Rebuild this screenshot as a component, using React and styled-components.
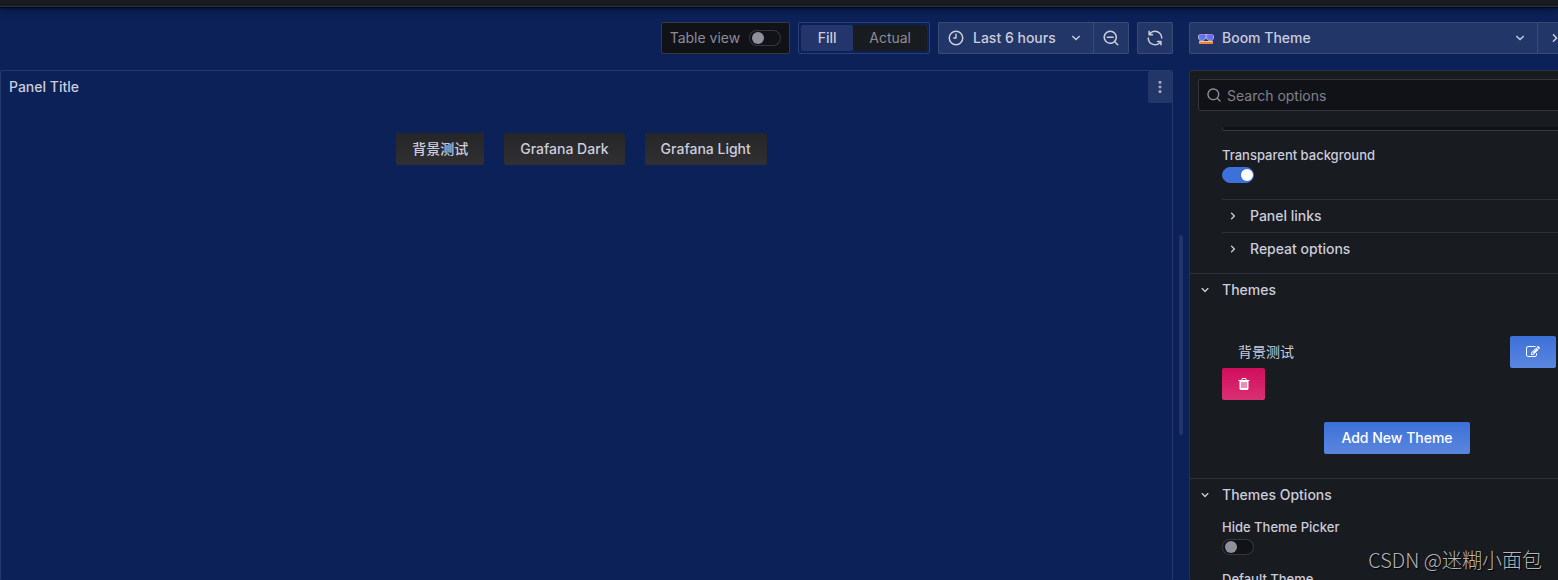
import React, { useState } from "react";
import styled, { createGlobalStyle, css } from "styled-components";

const color = {
  canvas: "#0b2158",
  surface: "#181b1f",
  field: "#111217",
  text: "#ccccdc",
  muted: "#8b8c97",
  line: "rgba(204, 204, 220, 0.14)",
  fieldLine: "rgba(204, 204, 220, 0.2)",
  raised: "rgba(204, 204, 220, 0.12)",
  primary: "#3d71d9",
};

const GlobalStyle = createGlobalStyle`
  *, *::before, *::after { box-sizing: border-box; }
  body {
    margin: 0;
    background: ${color.canvas};
    color: ${color.text};
    font: 400 14px/22px Inter, "Noto Sans CJK SC", sans-serif;
  }
  button, input, textarea { font: inherit; color: inherit; }
  button { margin: 0; padding: 0; border: 0; background: none; cursor: pointer; }
`;

const iconPaths = {
  clock:
    "M12,2A10,10,0,1,0,22,12,10,10,0,0,0,12,2Zm0,18a8,8,0,1,1,8-8A8,8,0,0,1,12,20ZM12,6a1,1,0,0,0-1,1v4H9a1,1,0,0,0,0,2h3a1,1,0,0,0,1-1V7A1,1,0,0,0,12,6Z",
  search:
    "M21.71,20.29,18,16.61A9,9,0,1,0,16.61,18l3.68,3.68a1,1,0,0,0,1.42,0A1,1,0,0,0,21.71,20.29ZM11,18a7,7,0,1,1,7-7A7,7,0,0,1,11,18Z",
  zoomOut:
    "M21.71,20.29,18,16.61A9,9,0,1,0,16.61,18l3.68,3.68a1,1,0,0,0,1.42,0A1,1,0,0,0,21.71,20.29ZM11,18a7,7,0,1,1,7-7A7,7,0,0,1,11,18Zm4-8H7a1,1,0,0,0,0,2h8a1,1,0,0,0,0-2Z",
  sync:
    "M19.91,15.51H15.38a1,1,0,0,0,0,2h2.4A8,8,0,0,1,4,12a1,1,0,1,0-2,0,10,10,0,0,0,16.88,7.23V21a1,1,0,0,0,2,0V16.5A1,1,0,0,0,19.91,15.51ZM12,2A10,10,0,0,0,5.12,4.77V3a1,1,0,0,0-2,0V7.5a1,1,0,0,0,1,1h4.5a1,1,0,0,0,0-2H6.22A8,8,0,0,1,20,12a1,1,0,0,0,2,0A10,10,0,0,0,12,2Z",
  down:
    "M17,9.17a1,1,0,0,0-1.41,0L12,12.71,8.46,9.17a1,1,0,0,0-1.41,0,1,1,0,0,0,0,1.42l4.24,4.24a1,1,0,0,0,1.42,0L17,10.59A1,1,0,0,0,17,9.17Z",
  right:
    "M14.83,11.29,10.59,7.05a1,1,0,0,0-1.42,0,1,1,0,0,0,0,1.41L12.71,12,9.17,15.54a1,1,0,0,0,0,1.41,1,1,0,0,0,.71.29,1,1,0,0,0,.71-.29l4.24-4.24A1,1,0,0,0,14.83,11.29Z",
  dots:
    "M10,3h4v4h-4ZM10,10h4v4h-4ZM10,17h4v4h-4Z",
};

const solidPaths = {
  edit:
    "M888 1184l116-116-152-152-116 116v56h96v96h56zm440-720q-16-16-33 1l-350 350q-17 17-1 33t33-1l350-350q17-17 1-33zm80 594v190q0 119-84.5 203.5t-203.5 84.5h-832q-119 0-203.5-84.5t-84.5-203.5v-832q0-119 84.5-203.5t203.5-84.5h832q63 0 117 25 15 7 18 23 3 17-9 29l-49 49q-14 14-32 8-23-6-45-6h-832q-66 0-113 47t-47 113v832q0 66 47 113t113 47h832q66 0 113-47t47-113v-126q0-13 9-22l64-64q15-15 35-7t20 29zm-96-738l288 288-672 672h-288v-288zm444 132l-92 92-288-288 92-92q28-28 68-28t68 28l152 152q28 28 28 68t-28 68z",
  trash:
    "M704 1376v-704q0-14-9-23t-23-9h-64q-14 0-23 9t-9 23v704q0 14 9 23t23 9h64q14 0 23-9t9-23zm256 0v-704q0-14-9-23t-23-9h-64q-14 0-23 9t-9 23v704q0 14 9 23t23 9h64q14 0 23-9t9-23zm256 0v-704q0-14-9-23t-23-9h-64q-14 0-23 9t-9 23v704q0 14 9 23t23 9h64q14 0 23-9t9-23zm-544-992h448l-48-117q-7-9-17-11h-317q-10 2-17 11zm928 32v64q0 14-9 23t-23 9h-96v948q0 83-47 143.5t-113 60.5h-832q-66 0-113-58.5t-47-141.5v-952h-96q-14 0-23-9t-9-23v-64q0-14 9-23t23-9h309l70-167q15-37 54-63t79-26h320q40 0 79 26t54 63l70 167h309q14 0 23 9t9 23z",
};

const Svg = styled.svg`
  display: block;
  flex: none;
  fill: currentColor;
`;

const Icon = ({ name, size = 16 }) => (
  <Svg width={size} height={size} viewBox="0 0 24 24" aria-hidden="true">
    <path d={iconPaths[name]} />
  </Svg>
);

const SolidIcon = ({ name, size = 14 }) => (
  <Svg width={size} height={size} viewBox="0 0 1792 1792" aria-hidden="true">
    <path d={solidPaths[name]} />
  </Svg>
);

const BoomLogo = () => (
  <Svg width="16" height="16" viewBox="0 0 16 16" aria-hidden="true">
    <defs>
      <linearGradient id="lens" x1="0" x2="1" y1="1" y2="0">
        <stop offset="0" stopColor="#3f9bf5" />
        <stop offset="1" stopColor="#8a4fe0" />
      </linearGradient>
    </defs>
    <path fill="#a9a6dc" d="M2 4h12l2 1.500v3L14 11h-3.500L8 8.500 5.500 11H2L0 8.500v-3z" />
    <path fill="url(#lens)" d="M2 4.500h4.500L7.500 6 6.500 9l-1.500 1.500H2.500L1 8.500V5.500z" />
    <path fill="url(#lens)" d="M9.500 4.500H14l1 1v3l-1.500 2H11L9.500 9l-1-3z" />
    <path fill="#f5813f" d="M1 11h14v3H1z" />
    <path fill="#ffc08a" d="M1 11h14v1H1z" />
  </Svg>
);

const AppFrame = styled.div`
  display: flex;
  flex-direction: column;
  height: 100vh;
  overflow: hidden;
`;

const TopBar = styled.header`
  flex: none;
  height: 7px;
  background: ${color.surface};
  border-bottom: 1px solid #2e3135;
  box-shadow: 0 1px 1px #05091c, 0 2px 8px rgba(1, 4, 9, 0.6);
`;

const Workspace = styled.div`
  flex: 1;
  min-height: 0;
  display: grid;
  grid-template-columns: minmax(0, 1fr) 16px 369px;
  padding-top: 15px;
`;

const Column = styled.div`
  display: flex;
  flex-direction: column;
  gap: 16px;
  min-width: 0;
  min-height: 0;
`;

const OptionsColumn = styled(Column)`
  margin-right: -15px;
`;

const Toolbar = styled.div`
  flex: none;
  display: flex;
  justify-content: flex-end;
  gap: 8px;
  height: 32px;
`;

const TableView = styled.label`
  display: flex;
  align-items: center;
  gap: 9px;
  padding: 0 8px;
  background: ${color.field};
  border: 1px solid #38393d;
  border-radius: 2px;
  color: ${color.muted};
`;

const Switch = styled.input.attrs({ type: "checkbox", role: "switch" })`
  appearance: none;
  flex: none;
  display: flex;
  align-items: center;
  width: 32px;
  height: 16px;
  margin: 0;
  padding: 0 2px;
  border: 1px solid ${color.fieldLine};
  border-radius: 8px;
  background: ${color.field};
  cursor: pointer;

  &::after {
    content: "";
    width: 12px;
    height: 12px;
    border-radius: 50%;
    background: #918f9c;
  }

  &:checked {
    justify-content: flex-end;
    padding: 0;
    background: ${color.primary};
    border-color: ${color.primary};
  }

  &:checked::after {
    background: #fff;
  }
`;

const Segments = styled.div`
  display: flex;
  padding: 2px;
  border: 1px solid #2b3f74;
  border-radius: 2px;
`;

const Segment = styled.button`
  min-width: 52px;
  padding: 0 16px;
  border-radius: 2px;
  background: ${color.surface};
  color: ${color.muted};
  ${(p) =>
    p.$active &&
    css`
      background: #23356a;
      color: ${color.text};
      font-weight: 500;
    `}
`;

const ButtonGroup = styled.div`
  display: flex;
  background: ${color.raised};
  border: 1px solid ${color.line};
  border-radius: 2px;
  font-weight: 500;
`;

const ToolButton = styled.button`
  display: flex;
  align-items: center;
  justify-content: center;
  gap: 8px;
  padding: 0 8px;

  & + & {
    border-left: 1px solid ${color.line};
  }
`;

const PickerButton = styled(ToolButton)`
  flex: 1;
  justify-content: flex-start;
`;

const TimeRange = styled.span`
  min-width: 86px;
  text-align: left;
`;

const Grow = styled.span`
  flex: 1;
  text-align: left;
`;

const OptionsToolbar = styled(ButtonGroup)`
  flex: none;
  height: 32px;
`;

const Panel = styled.section`
  flex: 1;
  border: 1px solid ${color.line};
  border-bottom: 0;
  border-radius: 2px;
`;

const PanelHeader = styled.div`
  display: flex;
  align-items: center;
  justify-content: space-between;
  height: 32px;
  padding-left: 8px;
`;

const PanelTitle = styled.h2`
  margin: 0;
  font-size: 14px;
  font-weight: 500;
`;

const MenuButton = styled.button`
  display: flex;
  align-items: center;
  justify-content: center;
  width: 24px;
  height: 32px;
  background: ${color.raised};
  border-radius: 2px;
  color: #a5a9c0;
`;

const ThemePicker = styled.div`
  display: flex;
  justify-content: center;
  gap: 20px;
  padding: 30px 10px 0 0;
`;

const ThemeButton = styled.button`
  height: 32px;
  padding: 0 16px;
  border-radius: 2px;
  background: linear-gradient(#262628, #303032);
  font-weight: 500;
`;

const Splitter = styled.div`
  display: flex;
  align-items: center;
  justify-content: center;
  margin: 48px 0 -20px;
`;

const SplitterHandle = styled.div`
  width: 4px;
  height: 200px;
  border-radius: 2px;
  background: #23356a;
`;

const Options = styled.aside`
  flex: 1;
  min-height: 0;
  display: flex;
  flex-direction: column;
  gap: 16px;
  padding-top: 8px;
  background: ${color.surface};
  border: 1px solid #2d3036;
  border-bottom: 0;
  border-radius: 2px;
`;

const SearchBox = styled.label`
  flex: none;
  display: flex;
  align-items: center;
  gap: 5px;
  height: 32px;
  margin-left: 8px;
  padding: 0 7px;
  background: ${color.field};
  border: 1px solid #35363c;
  border-radius: 2px;
  color: ${color.muted};
`;

const SearchInput = styled.input`
  flex: 1;
  min-width: 0;
  padding: 2px 0 0;
  border: 0;
  outline: 0;
  background: none;

  &::placeholder {
    color: #80818b;
    opacity: 1;
  }
`;

const OptionsScroll = styled.div`
  flex: 1;
  min-height: 0;
  overflow: hidden;
`;

const Group = styled.section`
  padding-left: 32px;

  & + & {
    border-top: 1px solid #2d3036;
  }
`;

const Description = styled.textarea`
  display: block;
  width: 100%;
  height: 32px;
  margin-top: -28px;
  border: 1px solid #3a3b41;
  border-radius: 2px;
  background: ${color.field};
  resize: none;
`;

const Field = styled.label`
  display: flex;
  flex-direction: column;
  gap: 4px;
  padding: 16px 0;
  font-size: 13px;
  font-weight: 500;
  line-height: 16px;
`;

const OptionField = styled(Field)`
  padding: 8px 0;
`;

const SubGroups = styled.div`
  padding-bottom: 8px;
`;

const SubToggle = styled.button`
  display: flex;
  align-items: center;
  gap: 9px;
  width: 100%;
  height: 33px;
  padding-left: 3px;
  border-top: 1px solid #2d3036;
  font-weight: 500;
`;

const IconSlot = styled.span`
  display: flex;
  justify-content: center;
  width: 16px;
`;

const GroupToggle = styled.button`
  display: flex;
  align-items: center;
  gap: 9px;
  height: 32px;
  margin-left: -25px;
  font-weight: 500;
`;

const ThemeList = styled.div`
  padding: 30px 0 22px;
`;

const ThemeRow = styled.div`
  display: flex;
  align-items: center;
  justify-content: space-between;
  padding: 0 16px;
`;

const ActionButton = styled.button`
  display: flex;
  align-items: center;
  justify-content: center;
  height: 32px;
  padding: 0 17px;
  border-radius: 2px;
  background: linear-gradient(${(p) => (p.$danger ? "#d10e5c, #da3074" : "#3d71d9, #5a86de")});
  color: #fff;
  font-weight: 500;
`;

const EditButton = styled(ActionButton)`
  width: 46px;
  padding: 0;
`;

const DeleteButton = styled(ActionButton)`
  width: 43px;
  padding: 0;
`;

const Centered = styled.div`
  display: flex;
  justify-content: center;
  padding-bottom: 24px;
`;

const Watermark = styled.div`
  position: absolute;
  right: 16px;
  bottom: 5px;
  color: #b4b5b7;
  font: 300 20px/30px "Noto Sans CJK SC", sans-serif;
  text-shadow: 1px 1px 1px #000;
  pointer-events: none;
`;

const themes = ["背景测试", "Grafana Dark", "Grafana Light"];

export default function App() {
  const [tableView, setTableView] = useState(false);
  const [fit, setFit] = useState("Fill");
  const [transparent, setTransparent] = useState(true);
  const [hidePicker, setHidePicker] = useState(false);

  return (
    <AppFrame>
      <GlobalStyle />
      <TopBar />
      <Workspace>
        <Column as="main">
          <Toolbar>
            <TableView>
              Table view
              <Switch checked={tableView} onChange={(e) => setTableView(e.target.checked)} />
            </TableView>
            <Segments>
              {["Fill", "Actual"].map((name) => (
                <Segment key={name} $active={fit === name} onClick={() => setFit(name)}>
                  {name}
                </Segment>
              ))}
            </Segments>
            <ButtonGroup>
              <ToolButton>
                <Icon name="clock" size={18} />
                <TimeRange>Last 6 hours</TimeRange>
                <Icon name="down" size={18} />
              </ToolButton>
              <ToolButton aria-label="Zoom out">
                <Icon name="zoomOut" size={18} />
              </ToolButton>
            </ButtonGroup>
            <ButtonGroup>
              <ToolButton aria-label="Refresh">
                <Icon name="sync" size={18} />
              </ToolButton>
            </ButtonGroup>
          </Toolbar>
          <Panel>
            <PanelHeader>
              <PanelTitle>Panel Title</PanelTitle>
              <MenuButton aria-label="Panel menu">
                <Icon name="dots" />
              </MenuButton>
            </PanelHeader>
            <ThemePicker>
              {themes.map((name) => (
                <ThemeButton key={name}>{name}</ThemeButton>
              ))}
            </ThemePicker>
          </Panel>
        </Column>

        <Splitter>
          <SplitterHandle />
        </Splitter>

        <OptionsColumn>
          <OptionsToolbar>
            <PickerButton>
              <BoomLogo />
              <Grow>Boom Theme</Grow>
              <Icon name="down" size={18} />
            </PickerButton>
            <ToolButton aria-label="Close options">
              <Icon name="right" size={18} />
            </ToolButton>
          </OptionsToolbar>
          <Options>
            <SearchBox>
              <Icon name="search" />
              <SearchInput type="text" placeholder="Search options" aria-label="Search options" />
            </SearchBox>
            <OptionsScroll>
              <Group>
                <Description aria-label="Description" />
                <Field>
                  Transparent background
                  <Switch checked={transparent} onChange={(e) => setTransparent(e.target.checked)} />
                </Field>
                <SubGroups>
                  {["Panel links", "Repeat options"].map((name) => (
                    <SubToggle key={name}>
                      <IconSlot>
                        <Icon name="right" />
                      </IconSlot>
                      {name}
                    </SubToggle>
                  ))}
                </SubGroups>
              </Group>
              <Group>
                <GroupToggle>
                  <IconSlot>
                    <Icon name="down" />
                  </IconSlot>
                  Themes
                </GroupToggle>
                <ThemeList>
                  <ThemeRow>
                    背景测试
                    <EditButton aria-label="Edit theme">
                      <SolidIcon name="edit" />
                    </EditButton>
                  </ThemeRow>
                  <DeleteButton $danger aria-label="Delete theme">
                    <SolidIcon name="trash" />
                  </DeleteButton>
                </ThemeList>
                <Centered>
                  <ActionButton>Add New Theme</ActionButton>
                </Centered>
              </Group>
              <Group>
                <GroupToggle>
                  <IconSlot>
                    <Icon name="down" />
                  </IconSlot>
                  Themes Options
                </GroupToggle>
                <OptionField>
                  Hide Theme Picker
                  <Switch checked={hidePicker} onChange={(e) => setHidePicker(e.target.checked)} />
                </OptionField>
                <OptionField as="div">Default Theme</OptionField>
              </Group>
            </OptionsScroll>
          </Options>
        </OptionsColumn>
      </Workspace>
      <Watermark>CSDN @迷糊小面包</Watermark>
    </AppFrame>
  );
}
